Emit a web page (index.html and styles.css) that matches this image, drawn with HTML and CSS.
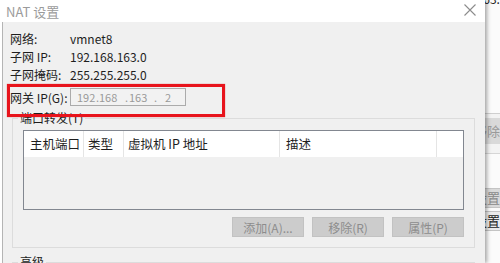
FILE: index.html
```html
<!doctype html>
<html lang="zh-CN">

<head>
    <meta charset="UTF-8">
    <title>NAT 设置</title>
    <link rel="stylesheet" href="styles.css">
</head>

<body>
    <div class="desk">
        <!-- 后面那个窗口，只露出右边一条 -->
        <div class="back-win">
            <div class="bw-top">192.168.163.0</div>
            <div class="bw-panel">
                <div class="bw-btn">移除</div>
            </div>
            <div class="bw-blank"></div>
            <div class="bw-set dim">默认设置</div>
            <div class="bw-set">默认设置</div>
        </div>

        <div class="dialog">
            <div class="titlebar">
                <span class="title">NAT 设置</span>
                <svg class="close" width="12" height="12" viewBox="0 0 12 12">
                    <path d="M0.5 0.5 L11.5 11.5 M11.5 0.5 L0.5 11.5" stroke="#8c8c8c" stroke-width="1.1" fill="none" />
                </svg>
            </div>
            <div class="body">
                <div class="info">
                    <div class="row"><span class="lbl">网络:</span><span class="val">vmnet8</span></div>
                    <div class="row"><span class="lbl">子网 IP:</span><span class="val">192.168.163.0</span></div>
                    <div class="row"><span class="lbl">子网掩码:</span><span class="val">255.255.255.0</span></div>
                    <div class="row gw">
                        <span class="lbl">网关 IP(G):</span>
                        <div class="ipbox">
                            <span class="oct o1">192</span><span class="dot d1">.</span><span class="oct o2">168</span><span class="dot d2">.</span><span class="oct o3">163</span><span class="dot d3">.</span><span class="oct">2</span>
                        </div>
                    </div>
                </div>

                <fieldset class="group">
                    <legend>端口转发(T)</legend>
                    <div class="list">
                        <div class="list-head">
                            <div class="col c1">主机端口</div>
                            <div class="col c2">类型</div>
                            <div class="col c3">虚拟机 IP 地址</div>
                            <div class="col c4">描述</div>
                            <div class="col c5"></div>
                        </div>
                    </div>
                    <div class="btns">
                        <button class="btn" disabled>添加(A)...</button>
                        <button class="btn" disabled>移除(R)</button>
                        <button class="btn" disabled>属性(P)</button>
                    </div>
                </fieldset>

                <fieldset class="group adv">
                    <legend>高级</legend>
                </fieldset>
            </div>

            <!-- 红框标注 -->
            <div class="mark"></div>
        </div>
    </div>
</body>

</html>
```

FILE: styles.css
```css
* {
    margin: 0;
    padding: 0;
    box-sizing: border-box;
}
body {
    width: 500px;
    height: 263px;
    overflow: hidden;
    background-color: #fafafa;
    font-family: "Noto Sans CJK SC", "Noto Sans", sans-serif;
    font-size: 12px;
    color: #1e1e1e;
}
.desk {
    position: relative;
    width: 500px;
    height: 263px;
}

/*后面的窗口*/
.back-win {
    position: absolute;
    left: 430px;
    top: 0;
    width: 80px;
    height: 263px;
    background-color: #fbfbfb;
}
.bw-top {
    margin-top: -9px;
    height: 14px;
    line-height: 16px;
    font-size: 12px;
    color: #222;
}
.bw-panel {
    margin-top: 108px;
    height: 41px;
    border-top: 1px solid #cfcfcf;
    border-bottom: 1px solid #d6d6d6;
    background-color: #f3f3f3;
    padding-top: 4px;
}
.bw-btn {
    height: 26px;
    line-height: 26px;
    background-color: #d9d9d9;
    color: #9a9a9a;
    padding-left: 44px;
    font-size: 13px;
}
.bw-blank {
    height: 34px;
}
.bw-set {
    height: 20px;
    line-height: 18px;
    background-color: #ececec;
    border: 1px solid #c4c4c4;
    padding-left: 17px;
    font-size: 13px;
    margin-bottom: 3px;
    white-space: nowrap;
}
.bw-set.dim {
    background-color: #d9d9d9;
    color: #8a8a8a;
}

/*对话框*/
.dialog {
    position: absolute;
    left: 0;
    top: 0;
    width: 485px;
    height: 263px;
    background-color: #fff;
    box-shadow: 2px 0 4px rgba(0, 0, 0, .35);
    overflow: hidden;
}
.titlebar {
    height: 22px;
    display: flex;
    align-items: center;
    justify-content: space-between;
    padding: 0 9px 0 6px;
    background-color: #fff;
}
.title {
    font-size: 13px;
    color: #9b9b9b;
}
.close {
    display: block;
    margin-top: -2px;
}
.body {
    height: 241px;
    margin-left: 2px;
    border-left: 1px solid #b4b4b4;
    background-color: #f0f0f0;
    padding: 7px 10px 0 7px;
}

/*基本信息*/
.row {
    display: flex;
    align-items: center;
    height: 18px;
}
.lbl {
    width: 60px;
    flex: none;
}
.row.gw {
    margin-top: 5px;
}
.ipbox {
    display: flex;
    align-items: center;
    width: 116px;
    height: 18px;
    border: 1px solid #ababab;
    background-color: #f2f2f2;
    color: #9a9a9a;
    font-size: 11px;
    padding-left: 6px;
}
.oct,
.dot {
    display: inline-block;
    flex: none;
}
.o1 {
    width: 19px;
}
.d1 {
    width: 3px;
}
.o2 {
    width: 26px;
}
.d2 {
    width: 4px;
}
.o3 {
    width: 25px;
}
.d3 {
    width: 11px;
}

/*分组框*/
.group {
    margin: 4px 0 0 2px;
    border: 1px solid #dcdcdc;
    padding: 4px 10px 10px 10px;
}
.group legend {
    margin-left: -5px;
    padding: 0 2px;
    line-height: 16px;
    font-size: 12px;
}
.group.adv {
    margin-top: 6px;
    height: 30px;
}

/*列表*/
.list {
    height: 80px;
    border: 1px solid #828790;
    background-color: #f0f0f0;
}
.list-head {
    display: flex;
    height: 26px;
    background-color: #fff;
}
.col {
    height: 26px;
    line-height: 26px;
    padding-left: 6px;
    border-right: 1px solid #e5e5e5;
    font-size: 12.5px;
    white-space: nowrap;
}
.c1 {
    width: 60px;
}
.c2 {
    width: 40px;
    padding-left: 4px;
}
.c3 {
    width: 156px;
    padding-left: 4px;
}
.c4 {
    width: 157px;
}
.c5 {
    flex: 1;
    border-right: none;
}

/*按钮*/
.btns {
    display: flex;
    justify-content: flex-end;
    gap: 8px;
    margin-top: 7px;
}
.btn {
    width: 72px;
    height: 20px;
    border: 1px solid #c2c2c2;
    background-color: #cccccc;
    color: #8c8c8c;
    font-family: inherit;
    font-size: 12px;
}

/*红框*/
.mark {
    position: absolute;
    left: 7px;
    top: 84px;
    width: 218px;
    height: 33px;
    border: 3px solid #e8141c;
    box-shadow: 0 0 1px rgba(200, 0, 0, .6);
}
```
